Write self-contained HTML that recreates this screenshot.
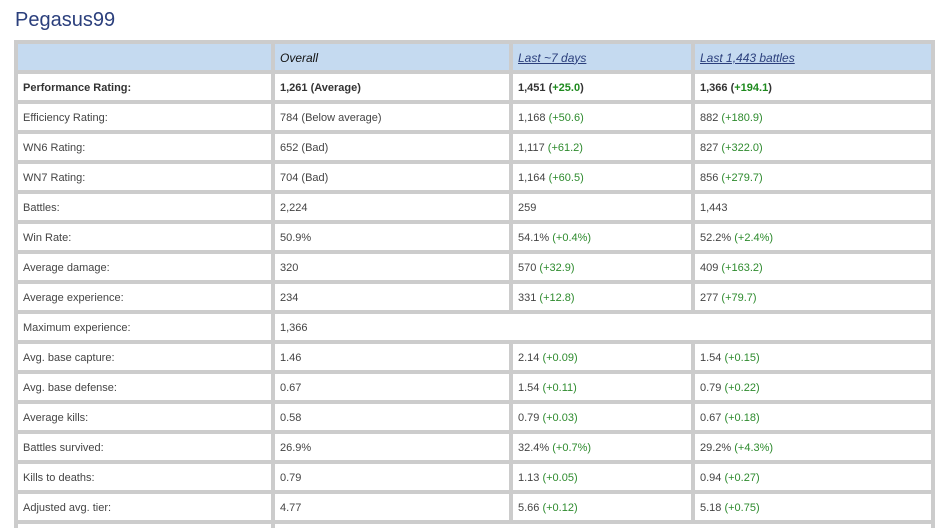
<!DOCTYPE html>
<html><head><meta charset="utf-8"><style>
html,body{margin:0;background:#fff;font-family:"Liberation Sans",Arial,sans-serif;width:948px;height:528px;overflow:hidden;position:relative;}
h1{position:absolute;left:15px;top:9px;margin:0;font-size:20px;font-weight:normal;color:#2b3f7c;}
table{position:absolute;left:14px;top:40px;width:921px;border-spacing:4px;background:#cccccc;table-layout:fixed;}
td{background:#fff;height:26px;padding:1px 0 0 5px;font-size:11px;color:#444;white-space:nowrap;overflow:hidden;vertical-align:middle;box-sizing:border-box;}
tr.h td{background:#c5daf0;font-style:italic;font-size:12px;color:#111;}
tr.h td a{color:#2b3f7c;text-decoration:underline;}
.g{color:#2e8b2e;}
tr.b td{font-weight:bold;color:#333;}
tr.b .g{color:#1e8a1e;}
</style></head><body>
<h1>Pegasus99</h1>
<table>
<colgroup><col style="width:253px"><col style="width:234px"><col style="width:178px"><col style="width:236px"></colgroup>
<tr class="h"><td></td><td>Overall</td><td><a>Last ~7 days</a></td><td><a>Last 1,443 battles</a></td></tr>
<tr class="b"><td>Performance Rating:</td><td>1,261 (Average)</td><td>1,451 (<span class="g">+25.0</span>)</td><td>1,366 (<span class="g">+194.1</span>)</td></tr>
<tr><td>Efficiency Rating:</td><td>784 (Below average)</td><td>1,168 <span class="g">(+50.6)</span></td><td>882 <span class="g">(+180.9)</span></td></tr>
<tr><td>WN6 Rating:</td><td>652 (Bad)</td><td>1,117 <span class="g">(+61.2)</span></td><td>827 <span class="g">(+322.0)</span></td></tr>
<tr><td>WN7 Rating:</td><td>704 (Bad)</td><td>1,164 <span class="g">(+60.5)</span></td><td>856 <span class="g">(+279.7)</span></td></tr>
<tr><td>Battles:</td><td>2,224</td><td>259</td><td>1,443</td></tr>
<tr><td>Win Rate:</td><td>50.9%</td><td>54.1% <span class="g">(+0.4%)</span></td><td>52.2% <span class="g">(+2.4%)</span></td></tr>
<tr><td>Average damage:</td><td>320</td><td>570 <span class="g">(+32.9)</span></td><td>409 <span class="g">(+163.2)</span></td></tr>
<tr><td>Average experience:</td><td>234</td><td>331 <span class="g">(+12.8)</span></td><td>277 <span class="g">(+79.7)</span></td></tr>
<tr><td>Maximum experience:</td><td colspan="3">1,366</td></tr>
<tr><td>Avg. base capture:</td><td>1.46</td><td>2.14 <span class="g">(+0.09)</span></td><td>1.54 <span class="g">(+0.15)</span></td></tr>
<tr><td>Avg. base defense:</td><td>0.67</td><td>1.54 <span class="g">(+0.11)</span></td><td>0.79 <span class="g">(+0.22)</span></td></tr>
<tr><td>Average kills:</td><td>0.58</td><td>0.79 <span class="g">(+0.03)</span></td><td>0.67 <span class="g">(+0.18)</span></td></tr>
<tr><td>Battles survived:</td><td>26.9%</td><td>32.4% <span class="g">(+0.7%)</span></td><td>29.2% <span class="g">(+4.3%)</span></td></tr>
<tr><td>Kills to deaths:</td><td>0.79</td><td>1.13 <span class="g">(+0.05)</span></td><td>0.94 <span class="g">(+0.27)</span></td></tr>
<tr><td>Adjusted avg. tier:</td><td>4.77</td><td>5.66 <span class="g">(+0.12)</span></td><td>5.18 <span class="g">(+0.75)</span></td></tr>
<tr><td>&nbsp;</td><td colspan="3"></td></tr>
</table>
</body></html>
